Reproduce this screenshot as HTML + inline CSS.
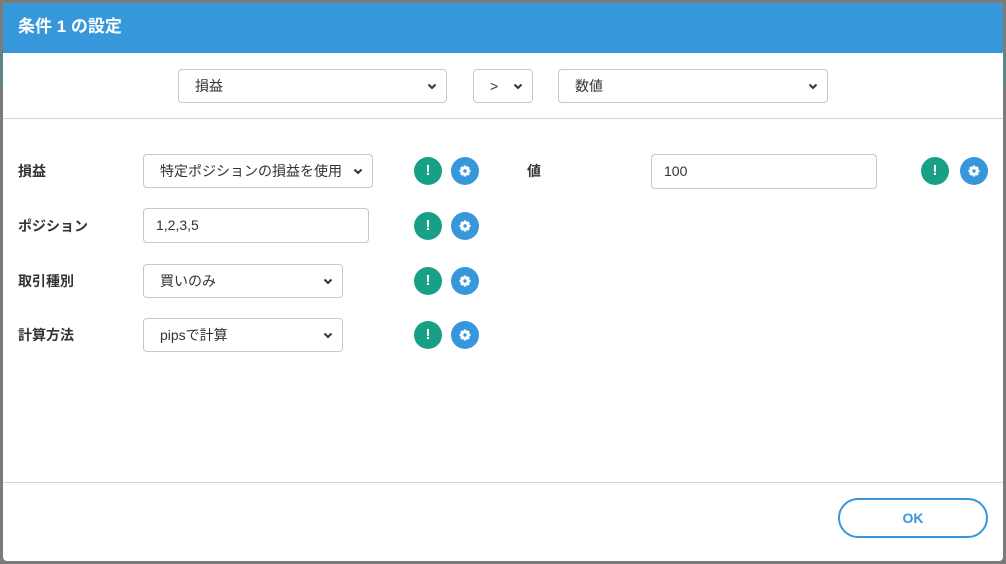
<!DOCTYPE html>
<html><head><meta charset="utf-8"><style>
*{box-sizing:border-box;margin:0;padding:0}
body{width:1006px;height:564px;background:#7b7b7b;position:relative;overflow:hidden;font-family:"Liberation Sans","Noto Sans CJK JP",sans-serif;}
.band{position:absolute;left:0;top:53px;width:1006px;height:32px;background:#5d8787}
.dlg{position:absolute;left:3px;top:3px;width:1000px;height:558px;background:#fff;border-radius:4px;overflow:hidden}
.hd{height:50px;background:#3797db;color:#fff;font-weight:bold;font-size:17px;line-height:48px;padding-left:15px}
.el{position:absolute;border:1px solid #c8c8c8;border-radius:4px;background:#fff;font-size:14px;color:#333;line-height:32px;padding-left:16px}
.el.in{padding-left:12px}
.el svg{position:absolute;right:9px;top:13px}
.lbl{position:absolute;font-size:14px;font-weight:bold;color:#333}
.ic{position:absolute;width:28px;height:28px;border-radius:50%}
.g{background:#17a085;color:#fff;font-weight:bold;font-size:15px;text-align:center;line-height:28px}
.b{background:#3797db}
.b svg{position:absolute;left:7px;top:7px}
.hr{position:absolute;left:0;width:1000px;height:1px;background:#d5d5d5}
.ok{position:absolute;left:835px;top:495px;width:150px;height:40px;border:2px solid #3797db;border-radius:20px;color:#3797db;font-weight:bold;font-size:14px;text-align:center;line-height:36px}
</style></head><body>
<div class="band"></div>
<svg width="0" height="0" style="position:absolute"><defs><symbol id="gear" viewBox="0 0 14 14"><g fill="#fff"><circle cx="7" cy="7" r="4.3"/><rect x="5.6" y="1.5" width="2.8" height="11" rx=".5"/><rect x="1.5" y="5.6" width="11" height="2.8" rx=".5"/><rect x="5.6" y="1.5" width="2.8" height="11" rx=".5" transform="rotate(45 7 7)"/><rect x="5.6" y="1.5" width="2.8" height="11" rx=".5" transform="rotate(-45 7 7)"/></g><circle cx="7" cy="7" r="1.7" fill="#3797db"/></symbol></defs></svg>
<div class="dlg">
<div class="hd">条件 1 の設定</div>
<div class="el" style="left:175px;top:66px;width:269px;height:34px">損益<svg width="10" height="7" viewBox="0 0 10 7"><path d="M1.5 1.5l3.5 3.5 3.5-3.5" stroke="#333" stroke-width="2" fill="none"/></svg></div>
<div class="el" style="left:470px;top:66px;width:60px;height:34px">&gt;<svg width="10" height="7" viewBox="0 0 10 7"><path d="M1.5 1.5l3.5 3.5 3.5-3.5" stroke="#333" stroke-width="2" fill="none"/></svg></div>
<div class="el" style="left:555px;top:66px;width:270px;height:34px">数値<svg width="10" height="7" viewBox="0 0 10 7"><path d="M1.5 1.5l3.5 3.5 3.5-3.5" stroke="#333" stroke-width="2" fill="none"/></svg></div>
<div class="hr" style="top:115px"></div>

<div class="lbl" style="left:15px;top:158px">損益</div>
<div class="el" style="left:140px;top:151px;width:230px;height:34px">特定ポジションの損益を使用<svg width="10" height="7" viewBox="0 0 10 7"><path d="M1.5 1.5l3.5 3.5 3.5-3.5" stroke="#333" stroke-width="2" fill="none"/></svg></div>
<div class="ic g" style="left:411px;top:154px">!</div><div class="ic b" style="left:448px;top:154px"><svg width="14" height="14"><use href="#gear"/></svg></div>

<div class="lbl" style="left:15px;top:213px">ポジション</div>
<div class="el in" style="left:140px;top:205px;width:226px;height:35px">1,2,3,5</div>
<div class="ic g" style="left:411px;top:209px">!</div><div class="ic b" style="left:448px;top:209px"><svg width="14" height="14"><use href="#gear"/></svg></div>

<div class="lbl" style="left:15px;top:268px">取引種別</div>
<div class="el" style="left:140px;top:261px;width:200px;height:34px">買いのみ<svg width="10" height="7" viewBox="0 0 10 7"><path d="M1.5 1.5l3.5 3.5 3.5-3.5" stroke="#333" stroke-width="2" fill="none"/></svg></div>
<div class="ic g" style="left:411px;top:264px">!</div><div class="ic b" style="left:448px;top:264px"><svg width="14" height="14"><use href="#gear"/></svg></div>

<div class="lbl" style="left:15px;top:322px">計算方法</div>
<div class="el" style="left:140px;top:315px;width:200px;height:34px">pipsで計算<svg width="10" height="7" viewBox="0 0 10 7"><path d="M1.5 1.5l3.5 3.5 3.5-3.5" stroke="#333" stroke-width="2" fill="none"/></svg></div>
<div class="ic g" style="left:411px;top:318px">!</div><div class="ic b" style="left:448px;top:318px"><svg width="14" height="14"><use href="#gear"/></svg></div>

<div class="lbl" style="left:524px;top:158px">値</div>
<div class="el in" style="left:648px;top:151px;width:226px;height:35px">100</div>
<div class="ic g" style="left:918px;top:154px">!</div><div class="ic b" style="left:957px;top:154px"><svg width="14" height="14"><use href="#gear"/></svg></div>

<div class="hr" style="top:479px"></div>
<div class="ok">OK</div>
</div>
</body></html>
